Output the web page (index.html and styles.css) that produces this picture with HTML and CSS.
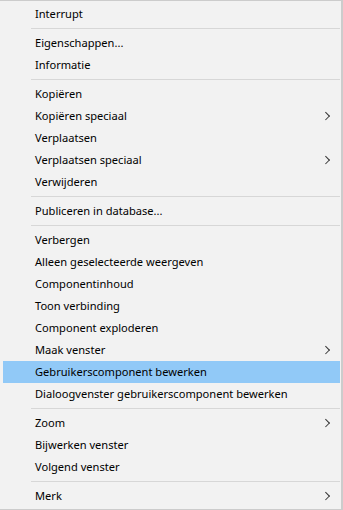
FILE: index.html
```html
<!DOCTYPE html>
<html>
<head>
<meta charset="utf-8">
<link rel="stylesheet" href="styles.css">
</head>
<body>
<div class="menu">
  <div class="item">Interrupt</div>
  <div class="sep"></div>
  <div class="item">Eigenschappen...</div>
  <div class="item">Informatie</div>
  <div class="sep"></div>
  <div class="item">Kopiëren</div>
  <div class="item sub">Kopiëren speciaal</div>
  <div class="item">Verplaatsen</div>
  <div class="item sub">Verplaatsen speciaal</div>
  <div class="item">Verwijderen</div>
  <div class="sep"></div>
  <div class="item">Publiceren in database...</div>
  <div class="sep"></div>
  <div class="item">Verbergen</div>
  <div class="item">Alleen geselecteerde weergeven</div>
  <div class="item">Componentinhoud</div>
  <div class="item">Toon verbinding</div>
  <div class="item">Component exploderen</div>
  <div class="item sub">Maak venster</div>
  <div class="item active">Gebruikerscomponent bewerken</div>
  <div class="item">Dialoogvenster gebruikerscomponent bewerken</div>
  <div class="sep"></div>
  <div class="item sub">Zoom</div>
  <div class="item">Bijwerken venster</div>
  <div class="item">Volgend venster</div>
  <div class="sep"></div>
  <div class="item sub">Merk</div>
</div>
</body>
</html>
```
FILE: styles.css
```css
html, body {
  margin: 0;
  padding: 0;
  background: #f2f2f2;
}
.menu {
  box-sizing: border-box;
  width: 343px;
  height: 510px;
  background: #f2f2f2;
  border-top: 1px solid #cccccc;
  border-bottom: 1px solid #cccccc;
  border-right: 2px solid #cccccc;
  padding: 2px 1px 2px 3px;
  font-family: "Segoe UI", "Noto Sans", "Open Sans", sans-serif;
  font-size: 11.1px;
  color: #000;
}
.item {
  position: relative;
  height: 22px;
  line-height: 22px;
  padding-left: 32px;
  white-space: nowrap;
}
.item.active {
  background: #91c9f7;
}
.item.sub::after {
  content: "";
  position: absolute;
  right: 12px;
  top: 8px;
  width: 4.5px;
  height: 4.5px;
  border-top: 1px solid #333;
  border-right: 1px solid #333;
  transform: rotate(45deg);
}
.sep {
  height: 7px;
  display: flex;
  align-items: center;
}
.sep::before {
  content: "";
  display: block;
  height: 1px;
  margin-left: 28px;
  flex: 1;
  background: #d7d7d7;
}
```
